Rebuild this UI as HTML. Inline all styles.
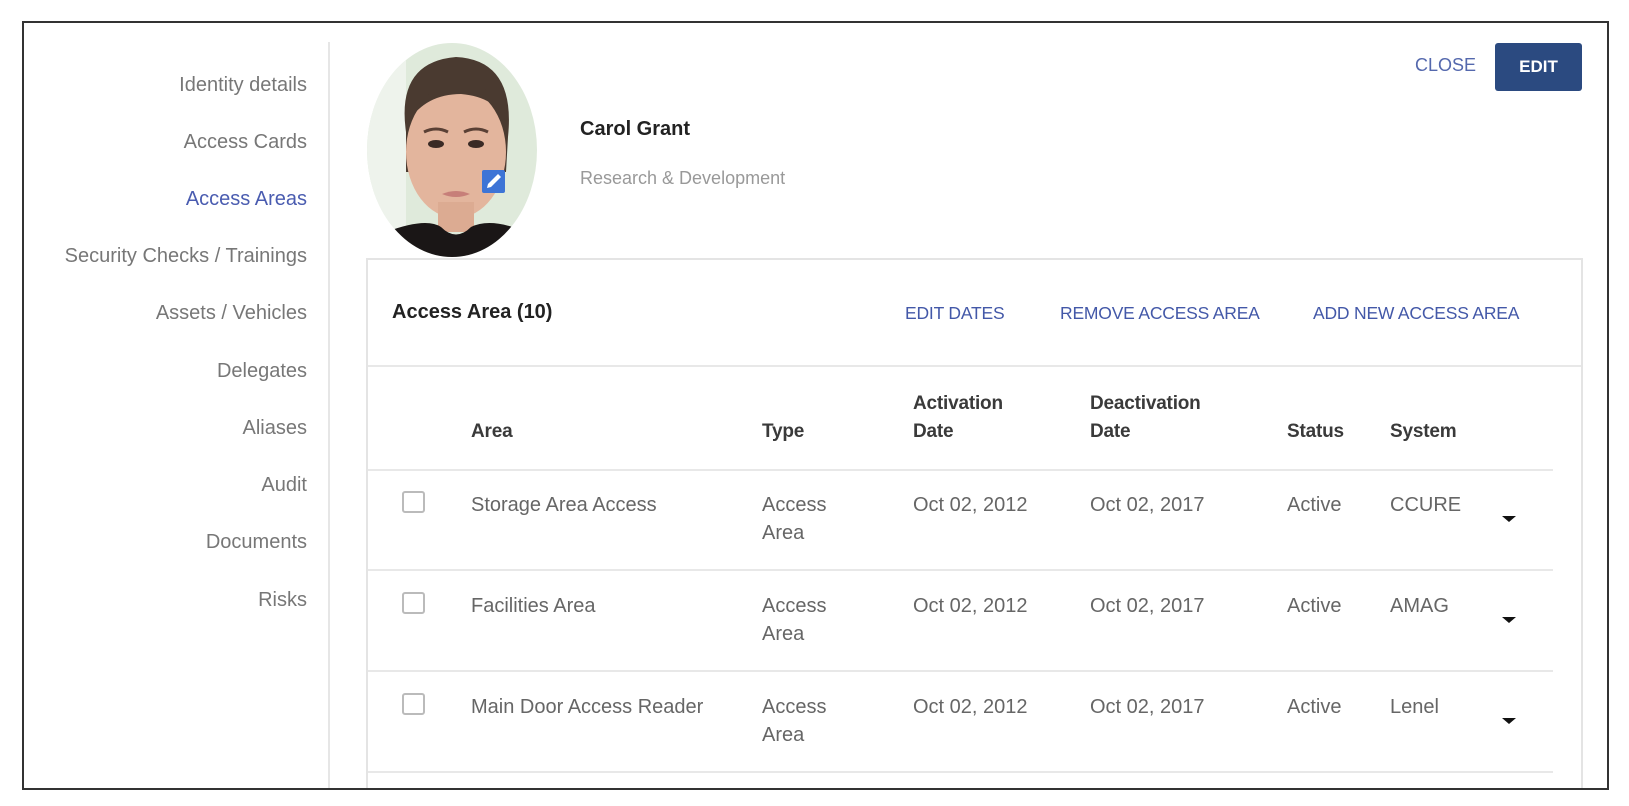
<!DOCTYPE html>
<html><head><meta charset="utf-8"><style>
*{margin:0;padding:0;box-sizing:border-box}
body{width:1629px;height:806px;background:#fff;position:relative;overflow:hidden;font-family:"Liberation Sans",sans-serif;color:#666}
.a{position:absolute;white-space:nowrap}
.frame{position:absolute;left:22px;top:21px;width:1587px;height:769px;border:2px solid #333}
.side{font-size:20px;color:#777;right:1322px;line-height:22px}
.lnk{font-size:17.5px;color:#4358a8;letter-spacing:-0.2px;line-height:20px}
.hdr{font-size:19px;color:#333;line-height:28px;font-weight:bold;letter-spacing:-0.2px;color:#3a3a3a}
.cell{font-size:20px;color:#666;line-height:28px}
.hl{position:absolute;height:2px;background:#e8e8e8}
.cb{position:absolute;width:23px;height:22px;border:2px solid #bbb;border-radius:3px}
.arr{position:absolute;width:0;height:0;border-left:7px solid transparent;border-right:7px solid transparent;border-top:6px solid #111}
</style></head><body>
<div class="a" style="left:328px;top:42px;width:2px;height:746px;background:#e6e6e6"></div>

<div class="a side" style="top:74px">Identity details</div>
<div class="a side" style="top:131px">Access Cards</div>
<div class="a side" style="top:188px;color:#4a5cb0">Access Areas</div>
<div class="a side" style="top:245px">Security Checks / Trainings</div>
<div class="a side" style="top:302px">Assets / Vehicles</div>
<div class="a side" style="top:360px">Delegates</div>
<div class="a side" style="top:417px">Aliases</div>
<div class="a side" style="top:474px">Audit</div>
<div class="a side" style="top:531px">Documents</div>
<div class="a side" style="top:589px">Risks</div>

<svg class="a" style="left:366px;top:42px" width="172" height="216" viewBox="0 0 172 216">
<defs><clipPath id="c"><ellipse cx="86" cy="108" rx="85" ry="107"/></clipPath></defs>
<g clip-path="url(#c)">
<rect width="172" height="216" fill="#dfeadb"/>
<rect x="0" y="0" width="40" height="216" fill="#eef3ec"/>
<path d="M40 90 Q30 20 90 15 Q150 18 142 95 L140 130 L40 130Z" fill="#4a3a30"/>
<ellipse cx="90" cy="110" rx="50" ry="66" fill="#e3b59d"/>
<path d="M42 80 Q60 40 100 42 Q135 45 140 80 Q130 55 95 52 Q60 52 42 80Z" fill="#4a3a30"/>
<rect x="72" y="160" width="36" height="30" fill="#dcab92"/>
<path d="M0 216 L20 190 Q60 175 75 185 Q90 200 105 185 Q125 175 160 190 L172 216Z" fill="#1a1616"/>
<ellipse cx="70" cy="102" rx="8" ry="4" fill="#3a2a25"/>
<ellipse cx="110" cy="102" rx="8" ry="4" fill="#3a2a25"/>
<path d="M58 90 Q70 84 82 90" stroke="#5a4035" stroke-width="3" fill="none"/>
<path d="M98 90 Q110 84 122 90" stroke="#5a4035" stroke-width="3" fill="none"/>
<path d="M76 152 Q90 146 104 152 Q90 158 76 152Z" fill="#c77f79"/>
</g>
<rect x="116" y="128" width="23" height="23" rx="2" fill="#3d74d6"/>
<path d="M121 146 L122 142 L132 132 L135 135 L125 145Z" fill="#fff"/>
</svg>

<div class="a" style="left:580px;top:117px;font-size:20px;font-weight:bold;color:#222;line-height:24px">Carol Grant</div>
<div class="a" style="left:580px;top:167px;font-size:18px;color:#999;line-height:22px">Research &amp; Development</div>

<div class="a" style="left:1415px;top:55px;font-size:18px;color:#5468ad;line-height:20px">CLOSE</div>
<div class="a" style="left:1495px;top:43px;width:87px;height:48px;background:#2b4a80;border-radius:3px;color:#fff;font-size:17px;font-weight:bold;text-align:center;line-height:48px">EDIT</div>

<div class="a" style="left:366px;top:258px;width:1217px;height:540px;border:2px solid #e4e4e4"></div>
<div class="a" style="left:392px;top:300px;font-size:20px;font-weight:bold;color:#222;line-height:24px">Access Area (10)</div>
<div class="a lnk" style="left:905px;top:303px">EDIT DATES</div>
<div class="a lnk" style="left:1060px;top:303px">REMOVE ACCESS AREA</div>
<div class="a lnk" style="left:1313px;top:303px">ADD NEW ACCESS AREA</div>
<div class="hl" style="left:368px;top:365px;width:1213px"></div>

<div class="a hdr" style="left:471px;top:418px">Area</div>
<div class="a hdr" style="left:762px;top:418px">Type</div>
<div class="a hdr" style="left:913px;top:390px">Activation<br>Date</div>
<div class="a hdr" style="left:1090px;top:390px">Deactivation<br>Date</div>
<div class="a hdr" style="left:1287px;top:418px">Status</div>
<div class="a hdr" style="left:1390px;top:418px">System</div>
<div class="hl" style="left:368px;top:469px;width:1185px"></div>

<div class="cb" style="left:402px;top:491px"></div>
<div class="a cell" style="left:471px;top:491px">Storage Area Access</div>
<div class="a cell" style="left:762px;top:491px">Access<br>Area</div>
<div class="a cell" style="left:913px;top:491px">Oct 02, 2012</div>
<div class="a cell" style="left:1090px;top:491px">Oct 02, 2017</div>
<div class="a cell" style="left:1287px;top:491px">Active</div>
<div class="a cell" style="left:1390px;top:491px">CCURE</div>
<div class="arr" style="left:1502px;top:516px"></div>
<div class="hl" style="left:368px;top:569px;width:1185px"></div>

<div class="cb" style="left:402px;top:592px"></div>
<div class="a cell" style="left:471px;top:592px">Facilities Area</div>
<div class="a cell" style="left:762px;top:592px">Access<br>Area</div>
<div class="a cell" style="left:913px;top:592px">Oct 02, 2012</div>
<div class="a cell" style="left:1090px;top:592px">Oct 02, 2017</div>
<div class="a cell" style="left:1287px;top:592px">Active</div>
<div class="a cell" style="left:1390px;top:592px">AMAG</div>
<div class="arr" style="left:1502px;top:617px"></div>
<div class="hl" style="left:368px;top:670px;width:1185px"></div>

<div class="cb" style="left:402px;top:693px"></div>
<div class="a cell" style="left:471px;top:693px">Main Door Access Reader</div>
<div class="a cell" style="left:762px;top:693px">Access<br>Area</div>
<div class="a cell" style="left:913px;top:693px">Oct 02, 2012</div>
<div class="a cell" style="left:1090px;top:693px">Oct 02, 2017</div>
<div class="a cell" style="left:1287px;top:693px">Active</div>
<div class="a cell" style="left:1390px;top:693px">Lenel</div>
<div class="arr" style="left:1502px;top:718px"></div>
<div class="hl" style="left:368px;top:771px;width:1185px"></div>

<div class="a" style="left:0;top:789px;width:1629px;height:17px;background:#fff;z-index:5"></div>
<div class="frame" style="z-index:6"></div>
</body></html>
